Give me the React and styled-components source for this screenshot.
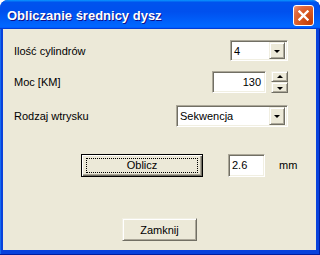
import React from 'react';
import styled, { createGlobalStyle, css } from 'styled-components';

const GlobalStyle = createGlobalStyle`
  html, body {
    margin: 0;
    padding: 0;
    background: #ffffff;
  }
  body {
    font-family: "Liberation Sans", Arial, sans-serif;
    font-size: 11px;
  }
`

const sunken = css`
  border: 1px solid;
  border-color: #aca899 #ffffff #ffffff #aca899;
  box-shadow: inset 1px 1px #716f64, inset -1px -1px #f1efe2;
  background: #ffffff;
`

const raised = css`
  border: 1px solid;
  border-color: #f1efe2 #716f64 #716f64 #f1efe2;
  box-shadow: inset 1px 1px #ffffff, inset -1px -1px #aca899;
  background: #ece9d8;
`

const Window = styled.div`
  width: 320px;
  height: 255px;
  box-sizing: border-box;
  display: flex;
  flex-direction: column;
  border-radius: 8px 8px 0 0;
  background: #0842dc;
  box-shadow: inset -1px -1px #001ea0, inset 1px 0 #166aee;
  overflow: hidden;
`

const TitleBar = styled.div`
  height: 29px;
  flex: none;
  display: flex;
  align-items: center;
  justify-content: space-between;
  padding: 0 6px 0 7px;
  background: linear-gradient(180deg, #0997ff, #0053ee 8%, #0050ee 40%, #0066ff 88%, #0066ff 93%, #005bff 95%, #003dd7 96%, #003dd7);
  border-radius: 8px 8px 0 0;
`

const Title = styled.div`
  color: #ffffff;
  font-family: "Liberation Sans", Arial, sans-serif;
  font-weight: bold;
  font-size: 13px;
  text-shadow: 1px 1px 0 #0f1089;
  padding-top: 1px;
`

const CloseButton = styled.div`
  width: 19px;
  height: 19px;
  border: 1px solid #ffffff;
  border-radius: 3px;
  display: flex;
  align-items: center;
  justify-content: center;
  background: radial-gradient(circle at 85% 85%, #c43e08 0%, #d95a22 50%, #e06b42 75%, #f09a7a 100%);
  margin-top: 2px;
`

const Body = styled.div`
  flex: 1;
  margin: 0 4px 5px 3px;
  background: #ece9d8;
  padding-top: 11px;
  color: #000000;
`

const Row = styled.div`
  display: flex;
  align-items: center;
  justify-content: space-between;
  height: ${p => p.h}px;
  margin-top: ${p => p.top || 0}px;
  padding: 0 28px 0 11px;
`

const FooterRow = styled.div`
  display: flex;
  justify-content: center;
  margin-top: ${p => p.top}px;
`

const Label = styled.span`
  white-space: nowrap;
`

const Combo = styled.div`
  ${sunken};
  box-sizing: border-box;
  width: ${p => p.w}px;
  height: ${p => p.h}px;
  display: flex;
  align-items: center;
  padding: 0 2px 0 3px;
`

const ComboText = styled.span`
  flex: 1;
`

const DropButton = styled.div`
  ${raised};
  box-sizing: border-box;
  width: 16px;
  height: ${p => p.h}px;
  display: flex;
  align-items: center;
  justify-content: center;
`

const ArrowDown = styled.div`
  width: 0;
  height: 0;
  border-left: ${p => p.s}px solid transparent;
  border-right: ${p => p.s}px solid transparent;
  border-top: ${p => p.s}px solid #000000;
  margin-top: 1px;
`

const ArrowUp = styled.div`
  width: 0;
  height: 0;
  border-left: ${p => p.s}px solid transparent;
  border-right: ${p => p.s}px solid transparent;
  border-bottom: ${p => p.s}px solid #000000;
`

const SpinGroup = styled.div`
  display: flex;
  align-items: center;
  gap: 5px;
`

const Edit = styled.div`
  ${sunken};
  box-sizing: border-box;
  width: ${p => p.w}px;
  height: ${p => p.h}px;
  display: flex;
  align-items: center;
  justify-content: ${p => (p.right ? 'flex-end' : 'flex-start')};
  padding: 0 4px 0 3px;
  margin-left: ${p => p.ml || 0}px;
`

const Spin = styled.div`
  display: flex;
  flex-direction: column;
  width: 17px;
  height: 22px;
`

const SpinButton = styled.div`
  ${raised};
  box-sizing: border-box;
  flex: 1;
  display: flex;
  align-items: center;
  justify-content: center;
`

const CalcRow = styled.div`
  display: flex;
  align-items: center;
  height: 24px;
  margin-top: 26px;
  padding-left: 78px;
`

const Button = styled.div`
  ${raised};
  box-sizing: border-box;
  width: ${p => p.w}px;
  height: 23px;
  display: flex;
  align-items: center;
  justify-content: center;
  position: relative;
  ${p => p.primary && css`
    border: 1px solid #000000;
    box-shadow: inset 1px 1px #ffffff, inset -1px -1px #716f64, inset -2px -2px #aca899;
  `}
`

const FocusRing = styled.div`
  position: absolute;
  inset: 3px 4px;
  border: 1px dotted #000000;
`

const Unit = styled.span`
  margin-left: 14px;
`

export default function App() {
  return (
    <>
      <GlobalStyle />
      <Window>
        <TitleBar>
          <Title>Obliczanie średnicy dysz</Title>
          <CloseButton>
            <svg width="11" height="11" viewBox="0 0 11 11">
              <path d="M1.5 1.5 L9.5 9.5 M9.5 1.5 L1.5 9.5" stroke="#ffffff" strokeWidth="2.4" strokeLinecap="square" />
            </svg>
          </CloseButton>
        </TitleBar>
        <Body>
          <Row h={21}>
            <Label>Ilość cylindrów</Label>
            <Combo w={58} h={21}>
              <ComboText>4</ComboText>
              <DropButton h={17}><ArrowDown s={3.5} /></DropButton>
            </Combo>
          </Row>
          <Row h={22} top={10}>
            <Label>Moc [KM]</Label>
            <SpinGroup>
              <Edit w={54} h={22} right>130</Edit>
              <Spin>
                <SpinButton><ArrowUp s={3} /></SpinButton>
                <SpinButton><ArrowDown s={3} /></SpinButton>
              </Spin>
            </SpinGroup>
          </Row>
          <Row h={22} top={12}>
            <Label>Rodzaj wtrysku</Label>
            <Combo w={112} h={22}>
              <ComboText>Sekwencja</ComboText>
              <DropButton h={18}><ArrowDown s={3.5} /></DropButton>
            </Combo>
          </Row>
          <CalcRow>
            <Button w={122} primary>
              <FocusRing />
              Oblicz
            </Button>
            <Edit w={37} h={23} ml={25}>2.6</Edit>
            <Unit>mm</Unit>
          </CalcRow>
          <FooterRow top={41}>
            <Button w={75}>Zamknij</Button>
          </FooterRow>
        </Body>
      </Window>
    </>
  );
}
